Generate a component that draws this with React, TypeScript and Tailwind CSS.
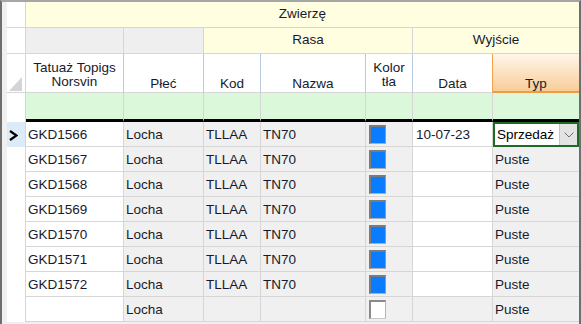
import React from "react";

type Row = { tat: string; plec: string; kod: string; nazwa: string; color: boolean; data: string; typ: string; dataWhite: boolean };

const rows: Row[] = [
  { tat: "GKD1566", plec: "Locha", kod: "TLLAA", nazwa: "TN70", color: true, data: "10-07-23", typ: "Sprzedaż", dataWhite: true },
  { tat: "GKD1567", plec: "Locha", kod: "TLLAA", nazwa: "TN70", color: true, data: "", typ: "Puste", dataWhite: true },
  { tat: "GKD1568", plec: "Locha", kod: "TLLAA", nazwa: "TN70", color: true, data: "", typ: "Puste", dataWhite: true },
  { tat: "GKD1569", plec: "Locha", kod: "TLLAA", nazwa: "TN70", color: true, data: "", typ: "Puste", dataWhite: true },
  { tat: "GKD1570", plec: "Locha", kod: "TLLAA", nazwa: "TN70", color: true, data: "", typ: "Puste", dataWhite: true },
  { tat: "GKD1571", plec: "Locha", kod: "TLLAA", nazwa: "TN70", color: true, data: "", typ: "Puste", dataWhite: true },
  { tat: "GKD1572", plec: "Locha", kod: "TLLAA", nazwa: "TN70", color: true, data: "", typ: "Puste", dataWhite: true },
  { tat: "", plec: "Locha", kod: "", nazwa: "", color: false, data: "", typ: "Puste", dataWhite: false },
];

function ColorBox({ filled }: { filled: boolean }) {
  return filled ? (
    <div className="w-[17px] h-[19px] border-t-2 border-l-2 border-r border-b border-t-[#7c7c7c] border-l-[#7c7c7c] border-r-[#9a9a9a] border-b-[#b0b0b0] bg-[#0a7cff]" />
  ) : (
    <div className="w-[17px] h-[19px] border-t-2 border-l-2 border-r border-b border-t-[#8a8a8a] border-l-[#8a8a8a] border-r-[#b5b5b5] border-b-[#c8c8c8] bg-white" />
  );
}

export default function App() {
  return (
    <div className="w-[581px] h-[324px] bg-[#f0f0f0] border-l-2 border-r-2 border-t-2 border-l-[#6e6e6e] border-r-[#6e6e6e] border-t-[#a6a6a6] pl-[5px] overflow-hidden font-['Liberation_Sans',Arial,sans-serif] text-[13.5px] text-[#161a2e]">
      <div className="grid grid-cols-[19px_98px_80px_57px_105px_47px_80px_86px] grid-rows-[26px_26px_39px_29px_repeat(8,25px)]">
        {/* Row 1: Zwierzę */}
        <div className="bg-white border-r border-b border-[#d6d6d6]" />
        <div className="col-span-7 bg-[#fffee1] border-b border-[#d6d6d6] flex items-center justify-center">Zwierzę</div>

        {/* Row 2: Rasa / Wyjście */}
        <div className="bg-white border-r border-b border-[#d6d6d6]" />
        <div className="bg-[#efefef] border-r border-b border-[#d6d6d6]" />
        <div className="bg-[#efefef] border-r border-b border-[#d6d6d6]" />
        <div className="col-span-3 bg-[#fffee1] border-r border-b border-[#d6d6d6] flex items-center justify-center">Rasa</div>
        <div className="col-span-2 bg-[#fffee1] border-b border-[#d6d6d6] flex items-center justify-center">Wyjście</div>

        {/* Row 3: column headers */}
        <div className="relative bg-white border-r border-b border-[#d6d6d6]">
          <svg className="absolute right-[3px] bottom-[1px]" width="13" height="14" viewBox="0 0 13 14">
            <polygon points="13,0 13,14 0,14" fill="#d4d4d4" />
          </svg>
        </div>
        <div className="bg-white border-r border-b border-r-[#b9cbe3] border-b-[#d6d6d6] flex items-end justify-center pb-[3px] text-center leading-[14px]">Tatuaż Topigs<br />Norsvin</div>
        <div className="bg-white border-r border-b border-r-[#b9cbe3] border-b-[#d6d6d6] flex items-end justify-center pb-[1px] leading-[15px]">Płeć</div>
        <div className="bg-white border-r border-b border-r-[#b9cbe3] border-b-[#d6d6d6] flex items-end justify-center pb-[1px] leading-[15px]">Kod</div>
        <div className="bg-white border-r border-b border-r-[#b9cbe3] border-b-[#d6d6d6] flex items-end justify-center pb-[1px] leading-[15px]">Nazwa</div>
        <div className="bg-white border-r border-b border-r-[#b9cbe3] border-b-[#d6d6d6] flex items-end justify-center pb-[3px] text-center leading-[14px]">Kolor<br />tła</div>
        <div className="bg-white border-r border-b border-r-[#f4a24f] border-b-[#d6d6d6] flex items-end justify-center pb-[1px] leading-[15px]">Data</div>
        <div className="bg-linear-to-b from-[#fef6ea] to-[#f8cd98] border-b-2 border-b-[#f39a3c] flex items-end justify-center pb-0 leading-[15px]">Typ</div>

        {/* Row 4: filter row (green) */}
        <div className="bg-white border-r border-[#d6d6d6]" />
        <div className="bg-[#dcf8da] border-r border-r-[#d6d6d6] border-b-[3px] border-b-black" />
        <div className="bg-[#dcf8da] border-r border-r-[#d6d6d6] border-b-[3px] border-b-black" />
        <div className="bg-[#dcf8da] border-r border-r-[#d6d6d6] border-b-[3px] border-b-black" />
        <div className="bg-[#dcf8da] border-r border-r-[#d6d6d6] border-b-[3px] border-b-black" />
        <div className="bg-[#dcf8da] border-r border-r-[#d6d6d6] border-b-[3px] border-b-black" />
        <div className="bg-[#dcf8da] border-r border-r-[#d6d6d6] border-b-[3px] border-b-black" />
        <div className="bg-[#dcf8da] border-b-[3px] border-b-black" />

        {/* Data rows */}
        {rows.map((r, i) => (
          <React.Fragment key={i}>
            <div className={(i === 0 ? "bg-[#dcebf8]" : "bg-white") + " border-r border-[#d6d6d6] relative"}>
              {i === 0 && (
                <svg className="absolute left-[2px] top-[8px]" width="9" height="11" viewBox="0 0 9 11">
                  <polyline points="1,1 7.5,5.5 1,10" fill="none" stroke="#000" strokeWidth="2.2" />
                </svg>
              )}
            </div>
            <div className="bg-white border-r border-b border-[#d6d6d6] flex items-center pl-[2px] pt-[3px]">{r.tat}</div>
            <div className="bg-[#f0f0f0] border-r border-b border-[#d6d6d6] flex items-center pl-[2px] pt-[3px]">{r.plec}</div>
            <div className="bg-[#f0f0f0] border-r border-b border-[#d6d6d6] flex items-center pl-[2px] pt-[3px]">{r.kod}</div>
            <div className="bg-[#f0f0f0] border-r border-b border-[#d6d6d6] flex items-center pl-[2px] pt-[3px]">{r.nazwa}</div>
            <div className="bg-[#f0f0f0] border-r border-b border-[#d6d6d6] flex items-center pl-[3px]">
              <ColorBox filled={r.color} />
            </div>
            <div className={(r.dataWhite ? "bg-white" : "bg-[#f0f0f0]") + " border-r border-b border-[#d6d6d6] flex items-center pl-[3px] pt-[3px]"}>{r.data}</div>
            {i === 0 ? (
              <div className="relative border-b border-[#d6d6d6] bg-white">
                <div className="absolute inset-0 bottom-[-1px] border-2 border-[#1f6a25] bg-white flex items-center">
                  <span className="pl-[2px] pt-[2px] flex-1 text-black">{r.typ}</span>
                  <div className="w-[18px] h-full bg-[#e3e3e3] border-l border-[#c6c6c6] flex items-center justify-center">
                    <svg width="10" height="6" viewBox="0 0 10 6">
                      <polyline points="0.5,0.5 5,5 9.5,0.5" fill="none" stroke="#707070" strokeWidth="1" />
                    </svg>
                  </div>
                </div>
              </div>
            ) : (
              <div className="bg-[#f0f0f0] border-b border-[#d6d6d6] flex items-center pl-[2px] pt-[3px]">{r.typ}</div>
            )}
          </React.Fragment>
        ))}
      </div>
    </div>
  );
}
